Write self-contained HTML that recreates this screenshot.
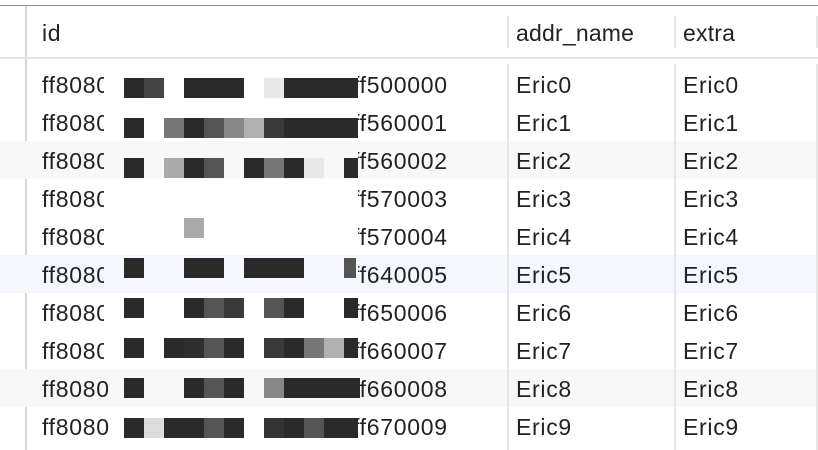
<!DOCTYPE html>
<html><head><style>
body{margin:0;width:818px;height:450px;overflow:hidden;background:#fff;position:relative;font-family:"Liberation Sans",sans-serif;font-size:23px;color:#222;}
div{position:absolute}
.t{line-height:40px;height:38px;white-space:nowrap;letter-spacing:0.7px}
.b{width:20px;height:20px}
</style></head><body>
<div style="left:0;top:5px;width:818px;height:1px;background:#8e8e8e"></div>
<div style="left:25px;top:6px;width:2px;height:444px;background:#d6d6d6"></div>
<div style="left:0;top:57px;width:818px;height:2px;background:#e4e4e4"></div>
<div style="left:507px;top:16px;width:2px;height:32px;background:#e6e6e6"></div>
<div style="left:674px;top:16px;width:2px;height:32px;background:#e6e6e6"></div>
<div style="left:816px;top:16px;width:2px;height:32px;background:#e6e6e6"></div>
<div style="left:0;top:141px;width:818px;height:38px;background:#f8f8f8"></div>
<div style="left:0;top:255px;width:818px;height:38px;background:#f4f7fd"></div>
<div style="left:0;top:369px;width:818px;height:38px;background:#f8f8f8"></div>
<div style="left:507px;top:64px;width:2px;height:386px;background:#e6e6e6"></div>
<div style="left:674px;top:64px;width:2px;height:386px;background:#e6e6e6"></div>
<div style="left:816px;top:64px;width:2px;height:386px;background:#e6e6e6"></div>
<div class="t" style="left:42px;top:13px">id</div>
<div class="t" style="left:516px;top:13px;letter-spacing:0.2px">addr_name</div>
<div class="t" style="left:683px;top:13px;letter-spacing:0.2px">extra</div>

<div class="t" style="left:42px;top:65px">ff8080</div><div class="t" style="left:353px;top:65px">ff500000</div><div class="t" style="left:516px;top:65px">Eric0</div><div class="t" style="left:683px;top:65px">Eric0</div>
<div class="t" style="left:42px;top:103px">ff8080</div><div class="t" style="left:353px;top:103px">ff560001</div><div class="t" style="left:516px;top:103px">Eric1</div><div class="t" style="left:683px;top:103px">Eric1</div>
<div class="t" style="left:42px;top:141px">ff8080</div><div class="t" style="left:353px;top:141px">ff560002</div><div class="t" style="left:516px;top:141px">Eric2</div><div class="t" style="left:683px;top:141px">Eric2</div>
<div class="t" style="left:42px;top:179px">ff8080</div><div class="t" style="left:353px;top:179px">ff570003</div><div class="t" style="left:516px;top:179px">Eric3</div><div class="t" style="left:683px;top:179px">Eric3</div>
<div class="t" style="left:42px;top:217px">ff8080</div><div class="t" style="left:353px;top:217px">ff570004</div><div class="t" style="left:516px;top:217px">Eric4</div><div class="t" style="left:683px;top:217px">Eric4</div>
<div class="t" style="left:42px;top:255px">ff8080</div><div class="t" style="left:353px;top:255px">ff640005</div><div class="t" style="left:516px;top:255px">Eric5</div><div class="t" style="left:683px;top:255px">Eric5</div>
<div class="t" style="left:42px;top:293px">ff8080</div><div class="t" style="left:353px;top:293px">ff650006</div><div class="t" style="left:516px;top:293px">Eric6</div><div class="t" style="left:683px;top:293px">Eric6</div>
<div class="t" style="left:42px;top:331px">ff8080</div><div class="t" style="left:353px;top:331px">ff660007</div><div class="t" style="left:516px;top:331px">Eric7</div><div class="t" style="left:683px;top:331px">Eric7</div>
<div class="t" style="left:42px;top:369px">ff8080</div><div class="t" style="left:353px;top:369px">ff660008</div><div class="t" style="left:516px;top:369px">Eric8</div><div class="t" style="left:683px;top:369px">Eric8</div>
<div class="t" style="left:42px;top:407px">ff8080</div><div class="t" style="left:353px;top:407px">ff670009</div><div class="t" style="left:516px;top:407px">Eric9</div><div class="t" style="left:683px;top:407px">Eric9</div>

<div style="left:104px;top:60px;width:254px;height:81px;background:#fff"></div>
<div style="left:104px;top:141px;width:254px;height:38px;background:#f8f8f8"></div>
<div style="left:104px;top:179px;width:254px;height:76px;background:#fff"></div>
<div style="left:104px;top:255px;width:254px;height:38px;background:#f4f7fd"></div>
<div style="left:104px;top:293px;width:254px;height:76px;background:#fff"></div>
<div style="left:108px;top:369px;width:250px;height:38px;background:#f8f8f8"></div>
<div style="left:114px;top:407px;width:244px;height:43px;background:#fff"></div>

<div class="b" style="left:124px;top:78px;background:#2a2a2a"></div><div class="b" style="left:144px;top:78px;background:#444"></div>
<div style="left:184px;top:78px;width:60px;height:20px;background:#2a2a2a"></div>
<div class="b" style="left:264px;top:78px;background:#e8e8e8"></div>
<div style="left:284px;top:78px;width:74px;height:20px;background:#2a2a2a"></div>
<div class="b" style="left:124px;top:118px;background:#2a2a2a"></div>
<div class="b" style="left:164px;top:118px;background:#777"></div><div class="b" style="left:184px;top:118px;background:#2a2a2a"></div><div class="b" style="left:204px;top:118px;background:#555"></div><div class="b" style="left:224px;top:118px;background:#888"></div><div class="b" style="left:244px;top:118px;background:#b0b0b0"></div><div class="b" style="left:264px;top:118px;background:#3a3a3a"></div>
<div style="left:284px;top:118px;width:74px;height:20px;background:#2a2a2a"></div>
<div class="b" style="left:124px;top:158px;background:#2a2a2a"></div>
<div class="b" style="left:164px;top:158px;background:#aaa"></div><div class="b" style="left:184px;top:158px;background:#2a2a2a"></div><div class="b" style="left:204px;top:158px;background:#555"></div>
<div class="b" style="left:244px;top:158px;background:#2a2a2a"></div><div class="b" style="left:264px;top:158px;background:#777"></div><div class="b" style="left:284px;top:158px;background:#2a2a2a"></div><div class="b" style="left:304px;top:158px;background:#e8e8e8"></div>
<div style="left:344px;top:158px;width:14px;height:20px;background:#2a2a2a"></div>
<div class="b" style="left:184px;top:218px;background:#aaa"></div>
<div class="b" style="left:124px;top:258px;background:#2a2a2a"></div>
<div style="left:184px;top:258px;width:40px;height:20px;background:#2a2a2a"></div>
<div style="left:244px;top:258px;width:60px;height:20px;background:#2a2a2a"></div>
<div style="left:344px;top:258px;width:12px;height:20px;background:#555"></div>
<div class="b" style="left:124px;top:298px;background:#2a2a2a"></div>
<div class="b" style="left:184px;top:298px;background:#2a2a2a"></div><div class="b" style="left:204px;top:298px;background:#555"></div><div class="b" style="left:224px;top:298px;background:#3a3a3a"></div>
<div class="b" style="left:264px;top:298px;background:#555"></div><div class="b" style="left:284px;top:298px;background:#2a2a2a"></div>
<div style="left:344px;top:298px;width:14px;height:20px;background:#2a2a2a"></div>
<div class="b" style="left:124px;top:338px;background:#2a2a2a"></div>
<div class="b" style="left:164px;top:338px;background:#2a2a2a"></div><div class="b" style="left:184px;top:338px;background:#2f2f2f"></div><div class="b" style="left:204px;top:338px;background:#555"></div><div class="b" style="left:224px;top:338px;background:#2a2a2a"></div>
<div class="b" style="left:264px;top:338px;background:#3a3a3a"></div><div class="b" style="left:284px;top:338px;background:#2a2a2a"></div><div class="b" style="left:304px;top:338px;background:#777"></div><div class="b" style="left:324px;top:338px;background:#b0b0b0"></div>
<div style="left:344px;top:338px;width:14px;height:20px;background:#2a2a2a"></div>
<div class="b" style="left:124px;top:378px;background:#2a2a2a"></div>
<div class="b" style="left:184px;top:378px;background:#2a2a2a"></div><div class="b" style="left:204px;top:378px;background:#555"></div><div class="b" style="left:224px;top:378px;background:#2a2a2a"></div>
<div class="b" style="left:264px;top:378px;background:#888"></div>
<div style="left:284px;top:378px;width:76px;height:20px;background:#2a2a2a"></div>
<div class="b" style="left:124px;top:418px;background:#2a2a2a"></div><div class="b" style="left:144px;top:418px;background:#ddd"></div>
<div style="left:164px;top:418px;width:40px;height:20px;background:#2a2a2a"></div><div class="b" style="left:204px;top:418px;background:#555"></div><div class="b" style="left:224px;top:418px;background:#2a2a2a"></div>
<div class="b" style="left:264px;top:418px;background:#333"></div><div class="b" style="left:284px;top:418px;background:#2a2a2a"></div><div class="b" style="left:304px;top:418px;background:#555"></div>
<div style="left:324px;top:418px;width:34px;height:20px;background:#2a2a2a"></div>
</body></html>
